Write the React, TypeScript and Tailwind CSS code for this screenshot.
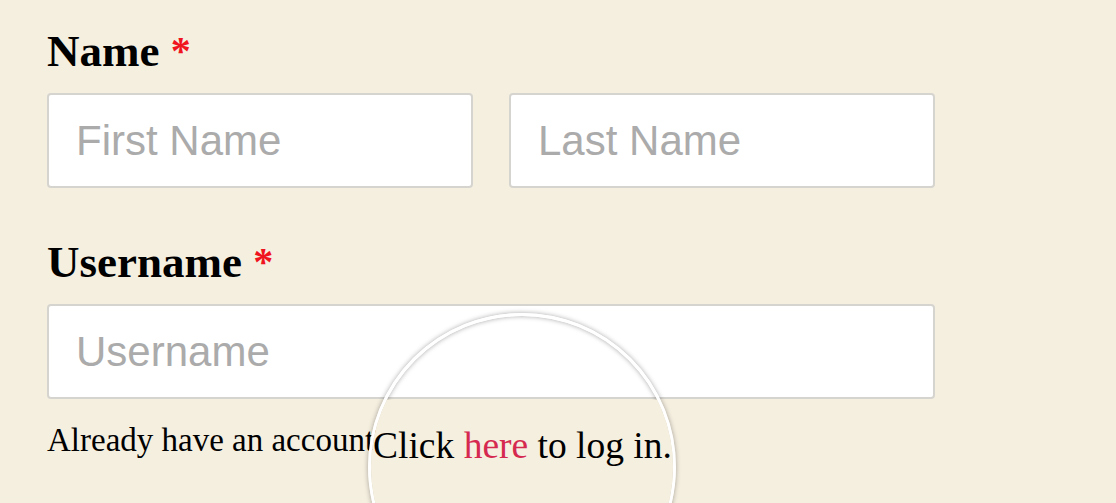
import type { ReactNode } from "react"

const serif = "font-['Liberation_Serif','Times_New_Roman',serif]"
const sans = "font-['Liberation_Sans',Arial,sans-serif]"

function Field({ label, children }: { label: string; children: ReactNode }) {
  return (
    <div className="flex flex-col gap-[19px]">
      <label className={`block text-[45px] font-bold leading-none text-black ${serif}`}>
        {label} <span className="relative -top-[2px] text-[40px] text-[#f0141e]">*</span>
      </label>
      <div className="flex gap-[36px]">{children}</div>
    </div>
  )
}

function TextField({ placeholder }: { placeholder: string }) {
  return (
    <input
      type="text"
      placeholder={placeholder}
      className={`box-border h-[95px] min-w-0 flex-1 rounded-[4px] border-2 border-[#d6d4cf] bg-white pl-[27px] text-[42px] text-neutral-800 outline-none placeholder:text-[#ababab] ${sans}`}
    />
  )
}

// the loupe lying over the "Click here to log in." part of the footer text
function Magnifier() {
  return (
    <div className="absolute left-[368px] top-[313px] box-border h-[308px] w-[308px] overflow-hidden rounded-full border-[3px] border-white shadow-[0_0_5px_rgba(0,0,0,0.35),inset_0_0_5px_rgba(0,0,0,0.35)]">
      <div className="absolute inset-x-0 top-[84px] bottom-0 bg-[#f5efe0] pl-[2px] pt-[27px]">
        <p className={`whitespace-nowrap text-[37.5px] leading-none text-black ${serif}`}>
          Click <span className="text-[#d6294f]">here</span> to log in.
        </p>
      </div>
    </div>
  )
}

export default function App() {
  return (
    <div className="relative h-[503px] w-full overflow-hidden bg-[#f5efe0] pl-[47px] pt-[29px]">
      <div className="flex w-[888px] flex-col">
        <Field label="Name">
          <TextField placeholder="First Name" />
          <TextField placeholder="Last Name" />
        </Field>

        <div className="mt-[52px]">
          <Field label="Username">
            <TextField placeholder="Username" />
          </Field>
        </div>

        <p className={`mt-[25px] whitespace-nowrap text-[33px] leading-none text-black ${serif}`}>
          Already have an account? Click <span className="text-[#d6294f]">here</span> to log in.
        </p>
      </div>
      <Magnifier />
    </div>
  )
}
